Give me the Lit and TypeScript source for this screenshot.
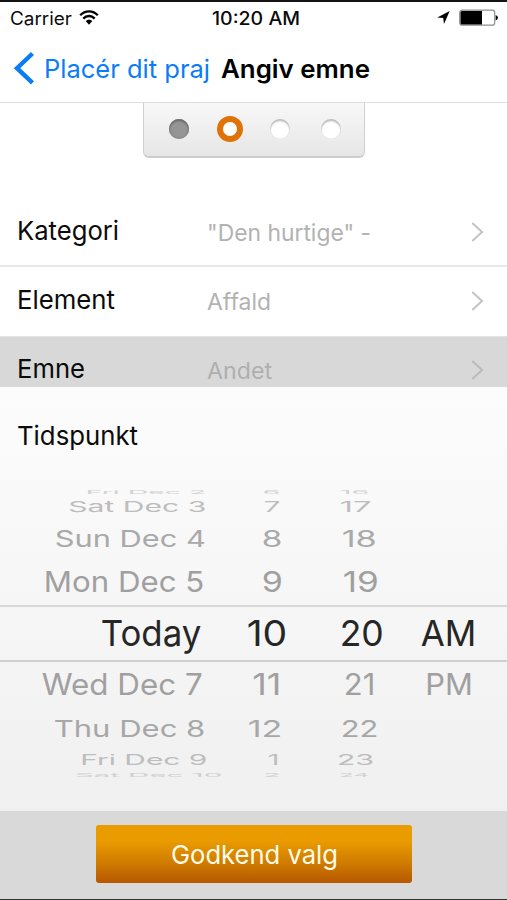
import { LitElement, html, svg, css } from "lit";
import { customElement, property } from "lit/decorators.js";

/** A single line of text whose advance width is fixed. */
@customElement("fit-line")
class FitLine extends LitElement {
  @property() text = "";
  @property({ type: Number }) width = 100;
  @property({ type: Number }) size = 18;
  static styles = css`
    :host { display: block; flex: none; }
    svg { display: block; overflow: visible; }
    text { fill: currentColor; font-family: Inter, Roboto, sans-serif; }
  `;
  render() {
    const h = Math.round(this.size * 1.2);
    return html`<svg width=${this.width} height=${h}>
      <text x="0" y=${this.size * 0.96} font-size=${this.size} textLength=${this.width} lengthAdjust="spacingAndGlyphs">${this.text}</text>
    </svg>`;
  }
}

type Cell = [string, number, number];
interface DrumRow { height: number; top: number; base: number; color: string; cells: Cell[]; }

const DRUM: DrumRow[] = [
  { height: 12, top: 5, base: 8.6, color: "#d2d2d2", cells: [["Fri Dec 2", 87, 205], ["6", 264, 279], ["16", 341, 368]] },
  { height: 33, top: 4.3, base: 15.2, color: "#bdbdbd", cells: [["Sat Dec 3", 69.5, 205], ["7", 265, 279], ["17", 341, 370]] },
  { height: 30, top: 0, base: 16.5, color: "#a9a9a9", cells: [["Sun Dec 4", 56, 204.5], ["8", 263, 281], ["18", 343, 375.5]] },
  { height: 45, top: 11.3, base: 32.4, color: "#a0a0a0", cells: [["Mon Dec 5", 45, 203], ["9", 263, 281.5], ["19", 344, 377.5]] },
  { height: 57, top: 15, base: 41, color: "#262626", cells: [["Today", 102, 200], ["10", 248, 286], ["20", 341, 382.5], ["AM", 422, 475]] },
  { height: 45, top: 12, base: 33.2, color: "#a0a0a0", cells: [["Wed Dec 7", 43, 201.5], ["11", 253.5, 280], ["21", 345, 374], ["PM", 426.5, 471.5]] },
  { height: 40, top: 13, base: 29.8, color: "#a7a7a7", cells: [["Thu Dec 8", 55, 204], ["12", 249, 281], ["22", 342, 377]] },
  { height: 23, top: 7.3, base: 18, color: "#bdbdbd", cells: [["Fri Dec 9", 81.5, 206], ["1", 269, 278], ["23", 338, 373]] },
  { height: 12, top: 3.6, base: 7.2, color: "#d0d0d0", cells: [["Sat Dec 10", 76, 221], ["2", 265, 279], ["24", 340, 368]] },
];

@customElement("date-drum")
class DateDrum extends LitElement {
  static styles = css`
    :host { display: block; }
    svg { display: block; overflow: visible; }
    text { font-family: Inter, Roboto, sans-serif; font-size: 36px; }
    .selected { border-top: 2px solid #d8d8d8; border-bottom: 2px solid #cfcfcf; box-sizing: border-box; height: 57px; }
  `;
  render() {
    return DRUM.map((row, i) => {
      const sy = (row.base - row.top) / 26.2;
      const selected = i === 4;
      return html`<div class=${selected ? "selected" : "row"}>
        <svg width="507" height=${selected ? row.height - 4 : row.height}>
          ${row.cells.map(([label, from, to]) => svg`<text
            transform="translate(${from - 1.3} ${selected ? row.base - 2 : row.base}) scale(1 ${sy})"
            fill=${row.color} textLength=${to - from + 2.6} lengthAdjust="spacingAndGlyphs">${label}</text>`)}
        </svg>
      </div>`;
    });
  }
}

const ROWS = [
  { label: "Kategori", w: 102, value: "\"Den hurtige\" -", vw: 164, cls: "row" },
  { label: "Element", w: 98, value: "Affald", vw: 64, cls: "row second" },
  { label: "Emne", w: 68, value: "Andet", vw: 65, cls: "row active" },
];

@customElement("app-root")
class AppRoot extends LitElement {
  static styles = css`
    :host { display: flex; flex-direction: column; width: 507px; height: 900px; box-sizing: border-box; overflow: hidden; background: #fff; color: #0b0b0b; border-top: 2px solid #141414; border-bottom: 1px solid #333; font-family: Inter, sans-serif; }
    svg { display: block; flex: none; }
    .status { height: 34px; flex: none; display: grid; grid-template-columns: 1fr auto 1fr; box-sizing: border-box; padding: 6px 9px 0 10px; }
    .left { display: flex; gap: 7px; }
    .left svg { margin-top: 1px; }
    .right { display: flex; justify-content: flex-end; gap: 9px; }
    .right svg { margin-top: -1px; }
    .time { font-weight: 500; margin-left: 4px; }
    .nav { height: 66px; flex: none; display: flex; box-sizing: border-box; padding: 15px 0 0 13px; }
    .back { display: flex; color: #0a7cf8; gap: 8px; }
    .back fit-line { margin-top: 2px; }
    .title { color: #000; font-weight: 600; margin: 2px 0 0 10.5px; }
    .steps { border-top: 1px solid #dedede; height: 96px; box-sizing: border-box; flex: none; display: flex; justify-content: center; }
    .panel { width: 222px; height: 54.5px; box-sizing: border-box; border: 1px solid #d0d0d0; border-top: 0; border-bottom: 2px solid #cdcdcd; border-radius: 0 0 6px 6px; background: linear-gradient(#f8f8f8, #e6e6e6); display: flex; gap: 24.5px; align-items: center; padding: 0 0 0 22px; margin-left: 1px; }
    .slot { width: 26px; display: flex; justify-content: center; }
    .dot { width: 20px; height: 20px; border-radius: 50%; box-sizing: border-box; background: #fff; box-shadow: inset 0 2px 2px #b8b8b8, inset 0 0 1px #ccc; }
    .dot.done { background: #959595; box-shadow: inset 0 2px 2px #6c6c6c, inset 0 0 2px #6e6e6e; }
    .dot.current { width: 26px; height: 26px; border: 6.5px solid #df7308; background: #fff; box-shadow: none; }
    .row { height: 69px; flex: none; box-sizing: border-box; border-bottom: 2px solid #e8e8e8; display: flex; padding: 17px 23px 0 17px; }
    .row.second { height: 70px; border-bottom: 1px solid #e4e4e4; }
    .row.active { height: 50px; border: 0; background: #d8d8d8; padding-top: 16px; }
    .label { width: 190px; }
    .value { color: #b2b2b2; flex: 1; padding-top: 4px; }
    .chev { margin-top: 7px; color: #c3c3c3; }
    .active .value { color: #afafaf; }
    .active .chev { color: #bababa; }
    .sheet { height: 424px; flex: none; background: linear-gradient(#fcfcfc, #f7f7f7 45%, #f0f0f0); }
    .heading { height: 98px; box-sizing: border-box; padding: 33px 0 0 17px; }
    .footer { flex: 1; background: #d9d9d9; display: flex; justify-content: center; align-items: flex-start; padding-top: 14px; box-sizing: border-box; }
    .button { width: 316px; height: 58px; box-sizing: border-box; border-radius: 3px; background: linear-gradient(#e99c00 0%, #e99b00 28%, #cf7c00 65%, #b75700 100%); color: #fffbe9; display: flex; justify-content: center; padding-top: 14px; margin-left: 1px; }
  `;
  render() {
    return html`
      <div class="status">
        <div class="left">
          <fit-line text="Carrier" width="62" size="18"></fit-line>
          <svg width="20" height="18" viewBox="0 0 20 18">
            <g fill="none" stroke="#000" stroke-width="2.3">
              <path d="M1.2 6.2 C6 1 14 1 18.8 6.2" /><path d="M4.3 9.6 C7.5 6.1 12.5 6.1 15.7 9.6" />
            </g>
            <path d="M6.7 12 Q10 8.9 13.3 12 L10 15.7 Z" />
          </svg>
        </div>
        <fit-line class="time" text="10:20 AM" width="88" size="18"></fit-line>
        <div class="right">
          <svg width="13" height="20" viewBox="0 0 13 20"><path d="M0.3 10.5 L12.7 4 L7 17 L6.2 10.9 Z" /></svg>
          <svg width="39" height="20" viewBox="0 0 39 20">
            <rect x="0.7" y="3.2" width="35" height="15" rx="2.5" fill="#fff" stroke="#8d8d8d" stroke-width="1.2" />
            <path d="M3 4H23V17.5H3Q1.5 17.5 1.5 16V5.5Q1.5 4 3 4Z" /><path d="M36.7 8Q39 9 39 10.7Q39 12.5 36.7 13.5Z" />
          </svg>
        </div>
      </div>
      <div class="nav">
        <div class="back">
          <svg width="23" height="34" viewBox="0 0 23 34"><path d="M19.5 2.5 L4 17.2 L19.5 31.8" fill="none" stroke="#0a7cf8" stroke-width="4.4" /></svg>
          <fit-line text="Placér dit praj" width="166" size="25.6"></fit-line>
        </div>
        <fit-line class="title" text="Angiv emne" width="149" size="25.6"></fit-line>
      </div>
      <div class="steps">
        <div class="panel">
          <div class="slot"><div class="dot done"></div></div>
          <div class="slot"><div class="dot current"></div></div>
          <div class="slot"><div class="dot"></div></div>
          <div class="slot"><div class="dot"></div></div>
        </div>
      </div>
      ${ROWS.map((r) => html`<div class=${r.cls}>
        <div class="label"><fit-line text=${r.label} width=${r.w} size="26"></fit-line></div>
        <div class="value"><fit-line text=${r.value} width=${r.vw} size="23"></fit-line></div>
        <svg class="chev" width="13" height="20" viewBox="0 0 13 20"><path d="M1.3 1 L11 10 L1.3 19" fill="none" stroke="currentColor" stroke-width="2" /></svg>
      </div>`)}
      <div class="sheet">
        <div class="heading"><fit-line text="Tidspunkt" width="121" size="26"></fit-line></div>
        <date-drum></date-drum>
      </div>
      <div class="footer">
        <div class="button"><fit-line text="Godkend valg" width="167" size="26"></fit-line></div>
      </div>`;
  }
}
